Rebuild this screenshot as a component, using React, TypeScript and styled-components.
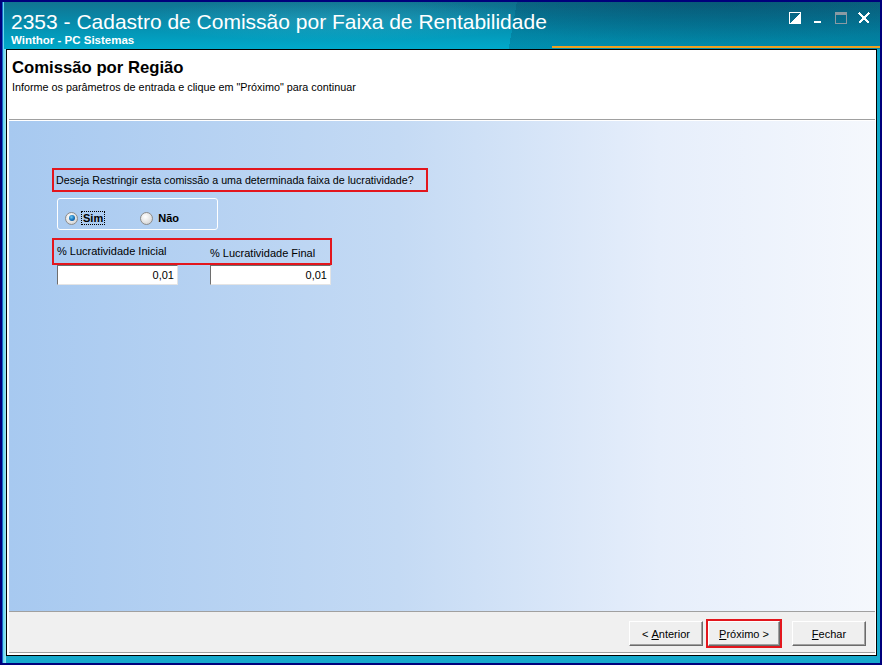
import React from 'react'
import styled, { createGlobalStyle } from 'styled-components'

const GlobalStyle = createGlobalStyle`
  html, body { margin: 0; padding: 0; }
  body {
    width: 882px;
    height: 665px;
    overflow: hidden;
    font-family: "Liberation Sans", Arial, sans-serif;
  }
`

const App = () => {
  return (
    <>
      <GlobalStyle />
      <Window>
        <Frame>
          <TitleBar>
            <TitleText>
              <Title>2353 - Cadastro de Comissão por Faixa de Rentabilidade</Title>
              <SubTitle>Winthor - PC Sistemas</SubTitle>
            </TitleText>
            <Controls>
              <CtrlIcon viewBox="0 0 12 12">
                <rect x="0.5" y="0.5" width="11" height="11" fill="none" stroke="#fff" />
                <polygon points="11,1 11,11 1,11" fill="#fff" />
              </CtrlIcon>
              <CtrlIcon viewBox="0 0 12 12">
                <rect x="2" y="9" width="7" height="2" fill="#fff" />
              </CtrlIcon>
              <CtrlIcon viewBox="0 0 12 12">
                <rect x="0.5" y="0.5" width="11" height="11" fill="none" stroke="#8a9aa3" />
                <rect x="0.5" y="0.5" width="11" height="2" fill="#8a9aa3" />
              </CtrlIcon>
              <CtrlIcon viewBox="0 0 12 12">
                <path d="M1 1 L11 11 M11 1 L1 11" stroke="#fff" strokeWidth="2" />
              </CtrlIcon>
            </Controls>
            <OrangeLine />
          </TitleBar>
          <Panel>
            <Header>
              <HeaderTitle>Comissão por Região</HeaderTitle>
              <HeaderHint>Informe os parâmetros de entrada e clique em "Próximo" para continuar</HeaderHint>
            </Header>
            <Body>
              <Question>Deseja Restringir esta comissão a uma determinada faixa de lucratividade?</Question>
              <RadioGroup>
                <RadioItem>
                  <RadioCircle checked />
                  <RadioLabel focused>Sim</RadioLabel>
                </RadioItem>
                <RadioItem>
                  <RadioCircle />
                  <RadioLabel>Não</RadioLabel>
                </RadioItem>
              </RadioGroup>
              <LabelsBox>
                <FieldLabel>% Lucratividade Inicial</FieldLabel>
                <FieldLabel offset>% Lucratividade Final</FieldLabel>
              </LabelsBox>
              <InputsRow>
                <NumberInput>0,01</NumberInput>
                <NumberInput>0,01</NumberInput>
              </InputsRow>
            </Body>
            <Footer>
              <Button>&lt; <u>A</u>nterior</Button>
              <Highlight>
                <Button narrow><u>P</u>róximo &gt;</Button>
              </Highlight>
              <Button><u>F</u>echar</Button>
            </Footer>
          </Panel>
        </Frame>
      </Window>
    </>
  )
}

export default App

const Window = styled.div`
  width: 882px;
  height: 665px;
  box-sizing: border-box;
  border: 2px solid #00007c;
  background: #00007c;
`

const Frame = styled.div`
  height: 100%;
  box-sizing: border-box;
  display: flex;
  flex-direction: column;
  padding: 0 3px 7px 4px;
  background:
    linear-gradient(90deg, #1466c8 0px, #1466c8 1px, #5fd4ec 1px, #9ce6f4 4px, transparent 4px),
    linear-gradient(180deg, #0b6f8e 0%, #0aa3c4 8%, #21bbd6 60%, #17a9cc 100%);
`

const TitleBar = styled.div`
  position: relative;
  height: 47px;
  margin: 0 -3px 0 -2px;
  padding: 0 0 0 7px;
  display: flex;
  justify-content: space-between;
  background:
    radial-gradient(ellipse 300px 30px at 330px 18px, rgba(120, 220, 240, 0.18), transparent 70%),
    radial-gradient(ellipse 420px 70px at 700px -8px, rgba(0, 60, 90, 0.35), transparent 70%),
    linear-gradient(100deg, transparent 0%, transparent 58%, rgba(0, 70, 100, 0.25) 58%, rgba(0, 70, 100, 0.35) 100%),
    linear-gradient(180deg, #117491 0%, #068cac 45%, #00aacb 100%);
`

const TitleText = styled.div`
  display: flex;
  flex-direction: column;
  padding-top: 8px;
  color: #fff;
`

const Title = styled.div`
  font-size: 21px;
  line-height: 24px;
`

const SubTitle = styled.div`
  font-size: 11.5px;
  font-weight: bold;
  line-height: 12px;
`

const Controls = styled.div`
  display: flex;
  gap: 11px;
  padding: 10px 10px 0 0;
`

const CtrlIcon = styled.svg`
  width: 12px;
  height: 12px;
  shape-rendering: crispEdges;
`

const OrangeLine = styled.div`
  position: absolute;
  left: 548px;
  right: 0;
  bottom: 1px;
  height: 2px;
  background: #f0a020;
`

const Panel = styled.div`
  flex: 1;
  display: flex;
  flex-direction: column;
  border: 1px solid #000;
  background: #fff;
  padding: 1px 1px 2px 2px;
`

const Header = styled.div`
  height: 69px;
  box-sizing: border-box;
  padding: 7px 0 0 3px;
  border-bottom: 1px solid #a0a0a0;
  background: #fff;
`

const HeaderTitle = styled.div`
  font-size: 16.7px;
  font-weight: bold;
  color: #000;
  line-height: 20px;
`

const HeaderHint = styled.div`
  font-size: 10.8px;
  color: #000;
  margin-top: 3px;
`

const Body = styled.div`
  flex: 1;
  display: flex;
  flex-direction: column;
  align-items: flex-start;
  padding: 47px 0 0 43px;
  border-top: 1px solid #fff;
  border-bottom: 1px solid #a0a0a0;
  background: linear-gradient(90deg, #a7c9f0 0%, #c4daf4 45%, #e6eefb 75%, #f5f8fd 100%);
`

const Question = styled.div`
  width: 376px;
  height: 24px;
  box-sizing: border-box;
  border: 2px solid #e3161d;
  padding: 0 0 0 2px;
  font-size: 10.7px;
  line-height: 20px;
  color: #000;
`

const RadioGroup = styled.div`
  margin: 6px 0 0 5px;
  width: 161px;
  height: 32px;
  box-sizing: border-box;
  border: 1px solid #fff;
  border-radius: 3px;
  display: flex;
  align-items: flex-end;
  padding: 0 0 4px 7px;
  gap: 35px;
`

const RadioItem = styled.div`
  display: flex;
  align-items: center;
  gap: 3px;
`

const RadioCircle = styled.span<{ checked?: boolean }>`
  width: 11px;
  height: 11px;
  border-radius: 50%;
  border: 1px solid #8c8c8c;
  background: radial-gradient(circle at 40% 35%, #ffffff 0%, #e6e6e6 50%, #c8c8c8 100%);
  display: flex;
  align-items: center;
  justify-content: center;
  &::after {
    content: '';
    display: ${(p) => (p.checked ? 'block' : 'none')};
    width: 6px;
    height: 6px;
    border-radius: 50%;
    background: radial-gradient(circle at 40% 35%, #6fc6f0 0%, #1a78c0 50%, #0a3f7c 100%);
  }
`

const RadioLabel = styled.span<{ focused?: boolean }>`
  font-size: 11px;
  font-weight: bold;
  color: #000;
  padding: 0 1px;
  line-height: 12px;
  border: 1px dotted ${(p) => (p.focused ? '#000' : 'transparent')};
`

const LabelsBox = styled.div`
  margin-top: 8px;
  width: 280px;
  height: 27px;
  box-sizing: border-box;
  border: 2px solid #e3161d;
  padding: 4px 0 0 3px;
  display: grid;
  grid-template-columns: 153px auto;
  align-items: start;
  font-size: 11px;
  color: #000;
`

const FieldLabel = styled.div<{ offset?: boolean }>`
  line-height: 14px;
  margin-top: ${(p) => (p.offset ? '2px' : '0')};
`

const InputsRow = styled.div`
  margin: 0 0 0 5px;
  display: grid;
  grid-template-columns: 153px 121px;
`

const NumberInput = styled.div`
  width: 121px;
  height: 20px;
  box-sizing: border-box;
  background: #fff;
  border-top: 1px solid #6e6e6e;
  border-left: 1px solid #6e6e6e;
  border-right: 1px solid #e4e4e4;
  border-bottom: 1px solid #e4e4e4;
  text-align: right;
  padding: 0 3px 0 0;
  font-size: 11px;
  line-height: 18px;
  color: #000;
`

const Footer = styled.div`
  height: 41px;
  box-sizing: border-box;
  display: flex;
  justify-content: flex-end;
  align-items: flex-start;
  padding: 9px 9px 0 0;
  background: #f0f0f0;
  border-bottom: 1px solid #a0a0a0;
  gap: 3px;
  & > *:last-child {
    margin-left: 7px;
  }
`

const Highlight = styled.div`
  border: 2px solid #e3161d;
  margin-top: -2px;
  padding: 0;
`

const Button = styled.div<{ narrow?: boolean }>`
  width: ${(p) => (p.narrow ? '72px' : '74px')};
  height: 25px;
  box-sizing: border-box;
  display: flex;
  align-items: center;
  justify-content: center;
  white-space: pre;
  background: #efefef;
  border-top: 1px solid #ffffff;
  border-left: 1px solid #ffffff;
  border-right: 1px solid #6b6b6b;
  border-bottom: 1px solid #6b6b6b;
  box-shadow: inset -1px -1px 0 #a0a0a0;
  font-size: 11px;
  color: #000;
  u { text-decoration: underline; }
`
